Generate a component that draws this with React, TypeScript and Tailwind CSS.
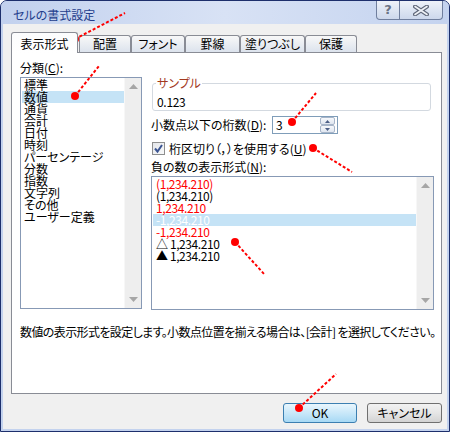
import React from "react";

function ScrollArrow({ down }: { down?: boolean }) {
  return (
    <div className="h-[17px] w-[17px] flex items-center justify-center">
      <svg width="9" height="5" viewBox="0 0 9 5">
        <path d={down ? "M0 0 H9 L4.5 5 Z" : "M0 5 H9 L4.5 0 Z"} fill="#a6a6a6" />
      </svg>
    </div>
  );
}

function Scrollbar() {
  return (
    <div className="w-[17px] h-full bg-[#eeeeee] border-l border-[#f7f7f7] flex flex-col justify-between">
      <ScrollArrow />
      <ScrollArrow down />
    </div>
  );
}

function Tab({ label, w }: { label: string; w: string }) {
  return (
    <div
      className={`h-[17px] ${w} flex items-center justify-center border border-b-0 border-[#898c95] rounded-t-[3px] bg-gradient-to-b from-[#f8f8f8] to-[#dce3ed]`}
    >
      {label}
    </div>
  );
}

export default function App() {
  const cats = [
    "標準",
    "数値",
    "通貨",
    "会計",
    "日付",
    "時刻",
    "パーセンテージ",
    "分数",
    "指数",
    "文字列",
    "その他",
    "ユーザー定義",
  ];
  const negs = [
    { t: "(1,234.210)", c: "text-[#ff0000]" },
    { t: "(1,234.210)", c: "text-black" },
    { t: "1,234.210", c: "text-[#ff0000]" },
    { t: "-1,234.210", c: "text-white bg-[#c5e3f6]" },
    { t: "-1,234.210", c: "text-[#ff0000]" },
    { t: "△ 1,234.210", c: "text-black" },
    { t: "▲ 1,234.210", c: "text-black" },
  ];

  return (
    <div className="relative w-[453px] h-[438px] bg-white font-['Noto_Sans_CJK_JP',sans-serif] text-[12px] leading-[12px] text-black [font-feature-settings:'palt']">
      <div className="w-[450px] h-[432px] flex flex-col rounded-t-[7px] border border-[#1d2f6c] bg-[#c3d2ee] overflow-hidden">
        {/* title bar */}
        <div className="h-[23px] flex items-start bg-gradient-to-r from-[#c2d1ee] via-[#d8e2f5] to-[#c4d3ef]">
          <div className="pl-[12px] pt-[8px] text-[#233d8c]">セルの書式設定</div>
          <div className="ml-auto mr-[6px] flex h-[19px]">
            <div className="w-[24px] h-[19px] border border-t-0 border-[#707f9e] rounded-bl-[4px] bg-gradient-to-b from-[#eef2f9] to-[#cdd8ec] flex items-center justify-center font-['DejaVu_Sans',sans-serif] text-[13px] font-bold text-[#6b7385]">
              ?
            </div>
            <div className="w-[43px] h-[19px] border border-t-0 border-l-0 border-[#707f9e] rounded-br-[4px] bg-gradient-to-b from-[#eef2f9] to-[#cdd8ec] flex items-center justify-center">
              <svg width="16" height="11" viewBox="0 0 16 11">
                <path d="M2 1.5 L14 9.5 M14 1.5 L2 9.5" stroke="#5f6779" strokeWidth="4" strokeLinecap="round" />
                <path d="M2 1.5 L14 9.5 M14 1.5 L2 9.5" stroke="#eef1f6" strokeWidth="1.6" strokeLinecap="round" />
              </svg>
            </div>
          </div>
        </div>

        {/* body */}
        <div className="flex-1 mx-[2px] mb-[2px] bg-[#f0f0f0] flex flex-col pl-[8px] pr-[5px] pt-[8px]">
          {/* tabs */}
          <div className="flex items-end h-[20px]">
            <div className="relative z-10 -mb-[1px] h-[21px] w-[67px] flex items-center justify-center pt-[1px] border border-b-0 border-[#898c95] rounded-t-[3px] bg-gradient-to-b from-[#fbfcfd] to-white">
              表示形式
            </div>
            <div className="ml-[1px] flex items-end">
              <Tab label="配置" w="w-[52px]" />
              <Tab label="フォント" w="w-[54px]" />
              <Tab label="罫線" w="w-[55px]" />
              <Tab label="塗りつぶし" w="w-[65px]" />
              <Tab label="保護" w="w-[52px]" />
            </div>
          </div>

          {/* panel */}
          <div className="w-[431px] h-[342px] border border-[#898c95] bg-white flex flex-col">
            <div className="flex pt-[9px] pl-[8px]">
              {/* left column */}
              <div className="w-[122px] flex flex-col">
                <div className="h-[12px]">
                  分類(<span className="underline">C</span>):
                </div>
                <div className="mt-[3px] h-[232px] border border-[#8799b5] bg-white flex">
                  <div className="flex-1 pt-[1px] pl-[1px]">
                    {cats.map((c, i) => (
                      <div
                        key={c}
                        className={`h-[12px] pl-[2px] leading-[12px] whitespace-nowrap ${i === 1 ? "bg-[#c5e3f6]" : ""}`}
                      >
                        {c}
                      </div>
                    ))}
                  </div>
                  <Scrollbar />
                </div>
              </div>

              {/* right column */}
              <div className="ml-[9px] w-[283px] mt-[15px] flex flex-col">
                <div className="ml-[1px] mr-[3px] mt-[6px] h-[28px] border border-[#d3d9e0] rounded-[3px] pl-[4px]">
                  <div className="-mt-[7px] -ml-[1px] w-fit px-[1px] bg-white text-[#a3391e]">サンプル</div>
                  <div className="mt-[7px] tracking-[-0.3px]">0.123</div>
                </div>

                <div className="mt-[5px] flex items-center h-[18px]">
                  <div className="w-[121px] whitespace-nowrap">
                    小数点以下の桁数(<span className="underline">D</span>):
                  </div>
                  <div className="w-[66px] h-[18px] border border-[#7f9db9] bg-white flex items-center">
                    <span className="pl-[3px] flex-1">3</span>
                    <div className="mr-[2px] flex flex-col">
                      <div className="w-[15px] h-[8px] border border-[#a7b5c9] rounded-[2px] bg-gradient-to-b from-[#f7f9fc] to-[#dfe6f0] flex items-center justify-center">
                        <svg width="5" height="3" viewBox="0 0 5 3">
                          <path d="M0 3 H5 L2.5 0 Z" fill="#4c5f86" />
                        </svg>
                      </div>
                      <div className="w-[15px] h-[8px] border border-[#a7b5c9] rounded-[2px] bg-gradient-to-b from-[#f7f9fc] to-[#dfe6f0] flex items-center justify-center">
                        <svg width="5" height="3" viewBox="0 0 5 3">
                          <path d="M0 0 H5 L2.5 3 Z" fill="#4c5f86" />
                        </svg>
                      </div>
                    </div>
                  </div>
                </div>

                <div className="mt-[8px] flex items-center h-[13px]">
                  <div className="ml-[1px] w-[13px] h-[13px] border border-[#8e8f8f] bg-gradient-to-br from-[#e4e6ea] to-[#f8f9fa] flex items-center justify-center">
                    <svg width="11" height="11" viewBox="0 0 11 11">
                      <path d="M2 5.5 L4.5 8.5 L9 2" stroke="#3b5592" strokeWidth="2" fill="none" />
                    </svg>
                  </div>
                  <div className="ml-[4px] whitespace-nowrap">
                    桁区切り（，）を使用する(<span className="underline">U</span>)
                  </div>
                </div>

                <div className="mt-[6px] h-[12px] whitespace-nowrap">
                  負の数の表示形式(<span className="underline">N</span>):
                </div>

                <div className="mt-[3px] h-[134px] border border-[#8799b5] bg-white flex">
                  <div className="flex-1 pt-[1px] pl-[1px]">
                    {negs.map((n, i) => (
                      <div key={i} className={`h-[12px] pl-[3px] leading-[12px] whitespace-nowrap tracking-[-0.4px] ${n.c}`}>
                        {n.t}
                      </div>
                    ))}
                  </div>
                  <Scrollbar />
                </div>
              </div>
            </div>

            <div className="mt-[16px] pl-[8px] whitespace-nowrap tracking-[-0.6px]">
              数値の表示形式を設定します。小数点位置を揃える場合は、[会計] を選択してください。
            </div>
          </div>

          {/* footer buttons */}
          <div className="mt-[9px] w-[431px] flex justify-end">
            <div className="w-[74px] h-[20px] border border-[#3c7fb1] rounded-[3px] bg-gradient-to-b from-[#e9f6fd] via-[#c9e8f9] to-[#a7d9f5] flex items-center justify-center">
              OK
            </div>
            <div className="ml-[10px] w-[75px] h-[20px] border border-[#707070] rounded-[3px] bg-gradient-to-b from-[#f2f2f2] via-[#e6e6e6] to-[#d3d3d3] flex items-center justify-center">
              キャンセル
            </div>
          </div>
        </div>
      </div>

      {/* annotation overlay */}
      <svg className="absolute left-0 top-0 pointer-events-none" width="453" height="438" viewBox="0 0 453 438">
        <g stroke="#ff0000" strokeWidth="2" strokeDasharray="3 2" fill="none">
          <line x1="75" y1="39" x2="125" y2="13" />
          <line x1="75" y1="96" x2="99" y2="66" />
          <line x1="292" y1="122" x2="316" y2="93" />
          <line x1="313" y1="148" x2="352" y2="172" />
          <line x1="235" y1="242" x2="265" y2="275" />
          <line x1="299" y1="408" x2="336" y2="374" />
        </g>
        <g fill="#ff0000">
          <circle cx="75" cy="39" r="4" />
          <circle cx="75" cy="96" r="4" />
          <circle cx="292" cy="122" r="4" />
          <circle cx="313" cy="148" r="4" />
          <circle cx="235" cy="242" r="4" />
          <circle cx="299" cy="408" r="4" />
        </g>
      </svg>
    </div>
  );
}
